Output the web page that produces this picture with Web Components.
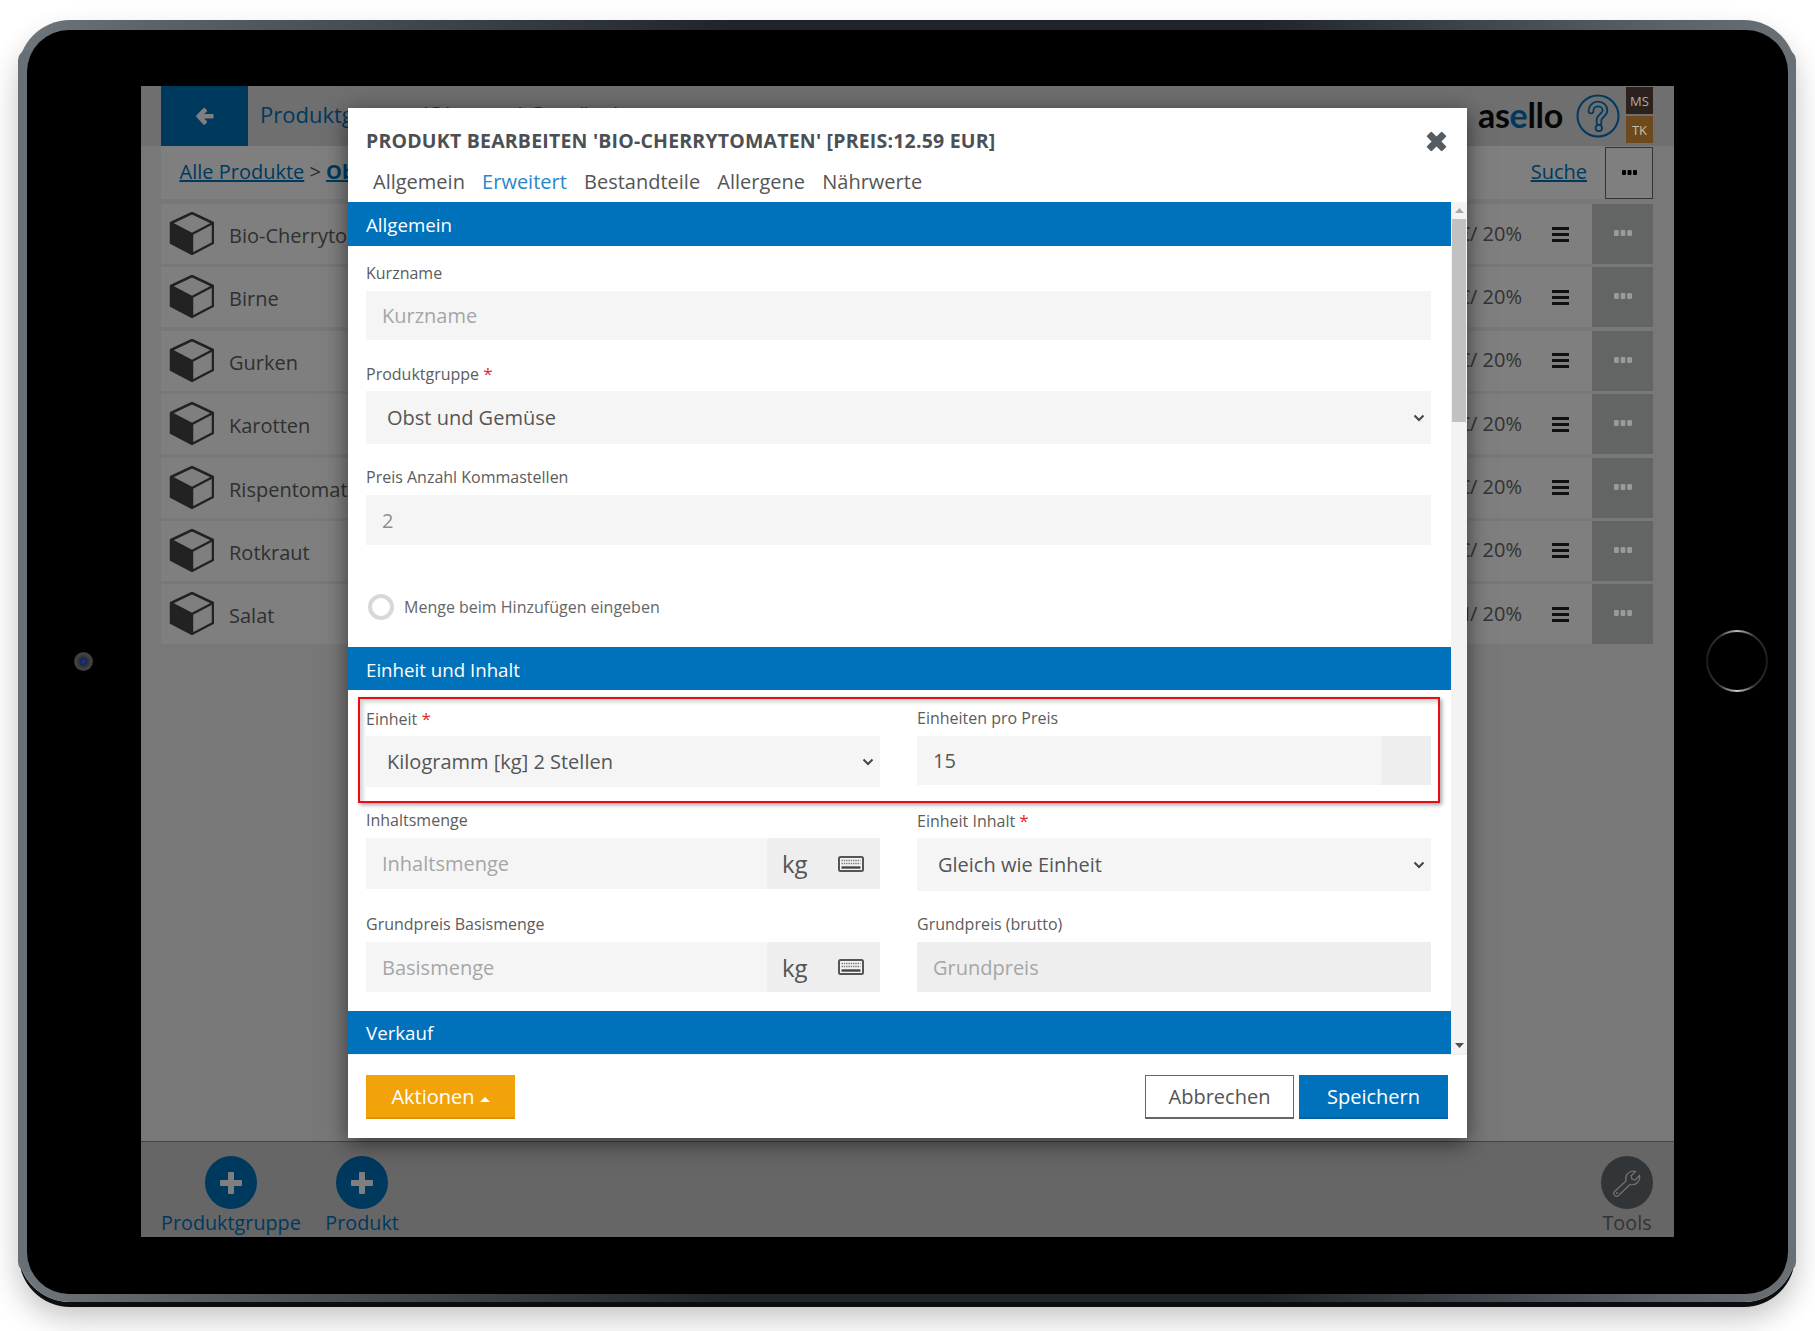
<!DOCTYPE html>
<html lang="de">
<head>
<meta charset="utf-8">
<title>Produkt bearbeiten</title>
<style>
  html, body { margin: 0; padding: 0; height: 1331px; overflow: hidden; background: #fff; font-family: "Open Sans", "Liberation Sans", sans-serif; }
</style>
</head>
<body>
<tablet-frame>
  <app-screen>
    <app-topbar slot="top" title="Produktgruppe (Obst und Gemüse)"></app-topbar>
    <crumb-bar slot="top"></crumb-bar>
    <product-row name="Bio-Cherrytomaten" tax="€/ 20%"></product-row>
    <product-row name="Birne" tax="€/ 20%"></product-row>
    <product-row name="Gurken" tax="€/ 20%"></product-row>
    <product-row name="Karotten" tax="€/ 20%"></product-row>
    <product-row name="Rispentomaten" tax="€/ 20%"></product-row>
    <product-row name="Rotkraut" tax="€/ 20%"></product-row>
    <product-row name="Salat" tax="M/ 20%"></product-row>
    <bottom-bar slot="bottom"></bottom-bar>
    <edit-modal slot="modal" heading="Produkt bearbeiten 'Bio-Cherrytomaten' [Preis:12.59 EUR]">
      <section-bar lift>Allgemein</section-bar>
      <form-section pad="17px 20px 27px 18px">
        <form-field label="Kurzname" h="49" placeholder="Kurzname"></form-field>
        <form-field label="Produktgruppe" required h="53" select value="Obst und Gemüse"></form-field>
        <form-field label="Preis Anzahl Kommastellen" h="50" muted value="2"></form-field>
        <radio-line>Menge beim Hinzufügen eingeben</radio-line>
      </form-section>
      <section-bar h="43" lift>Einheit und Inhalt</section-bar>
      <form-section grid pad="18px 19px 19px 18px">
        <form-field label="Einheit" required h="51" select value="Kilogramm [kg] 2 Stellen"></form-field>
        <form-field label="Einheiten pro Preis" h="49" value="15" addon></form-field>
        <form-field label="Inhaltsmenge" h="51" placeholder="Inhaltsmenge" unit="kg"></form-field>
        <form-field label="Einheit Inhalt" required h="53" select value="Gleich wie Einheit"></form-field>
        <form-field label="Grundpreis Basismenge" h="50" placeholder="Basismenge" unit="kg"></form-field>
        <form-field label="Grundpreis (brutto)" h="50" placeholder="Grundpreis" disabled></form-field>
        <red-mark></red-mark>
      </form-section>
      <section-bar h="43">Verkauf</section-bar>
    </edit-modal>
  </app-screen>
</tablet-frame>

<script>
const dots = '<svg width="15" height="5" viewBox="0 0 15 5"><rect width="4" height="5" rx="1"/><rect x="5.5" width="4" height="5" rx="1"/><rect x="11" width="4" height="5" rx="1"/></svg>'
const chevron = '<svg width="12" height="8" viewBox="0 0 12 8"><path d="M1.5 1.5 6 6l4.5-4.5" fill="none" stroke="#444" stroke-width="2"/></svg>'
const keyboard = `<svg width="26" height="16" viewBox="0 0 26 16">
  <rect x="1" y="1" width="24" height="14" rx="1.5" fill="#f4f4f4" stroke="#555" stroke-width="2"/>
  <path d="M3.5 4.5h19M3.5 7.5h19" stroke="#777" stroke-width="1.6" stroke-dasharray="1.4 .9"/>
  <path d="M3.5 11.5h19" stroke="#444" stroke-width="2.4"/>
</svg>`
const plus = '<svg width="24" height="24" viewBox="0 0 24 24"><path d="M9 2a1 1 0 0 1 1-1h4a1 1 0 0 1 1 1v7h7a1 1 0 0 1 1 1v4a1 1 0 0 1-1 1h-7v7a1 1 0 0 1-1 1h-4a1 1 0 0 1-1-1v-7H2a1 1 0 0 1-1-1v-4a1 1 0 0 1 1-1h7z" fill="#fff"/></svg>'

class TabletFrame extends HTMLElement {
    constructor() {
        super()
        this.attachShadow({ mode: "open" })
        this.shadowRoot.innerHTML = `
            <style>
                :host {
                    display: block; position: relative; box-sizing: border-box;
                    width: 1778px; height: 1282px; margin: 20px 0 0 18px; padding: 10px 8px 8px 9px;
                    border-radius: 52px;
                    background: linear-gradient(90deg, #6f767c 0, #5a6167 8%, #1f252b 40%, #1f252b 70%, #596067 92%, #6a7076 100%);
                    box-shadow: 0 6px 0 -1px #0b0d0f, 0 16px 30px rgba(0,0,0,.24);
                }
                #side { position: absolute; inset: 30px 0; background: #686f75; border-radius: 10px; z-index: 0; }
                #glass {
                    position: relative; z-index: 1; box-sizing: border-box; height: 100%; background: #000;
                    border-radius: 42px; padding: 56px 114px 57px 114px;
                }
                #camera {
                    position: absolute; left: 47px; top: 622px; width: 19px; height: 19px; border-radius: 50%;
                    background: radial-gradient(circle, #1c3c8e 0, #14265a 22%, #333 36%, #444 58%, #161616 100%);
                }
                #home {
                    position: absolute; right: 20px; top: 600px; width: 62px; height: 62px; border-radius: 50%;
                    box-sizing: border-box; padding: 2px;
                    background: conic-gradient(#bdbdbd 0, #333 35deg, #1a1a1a 90deg, #333 145deg, #cfcfcf 180deg, #333 215deg, #1a1a1a 270deg, #333 325deg, #bdbdbd 360deg);
                }
                #home i { display: block; width: 100%; height: 100%; border-radius: 50%; background: #000; }
            </style>
            <div id="side"></div>
            <div id="glass"><slot></slot><div id="camera"></div><div id="home"><i></i></div></div>
        `
    }
}

class AppScreen extends HTMLElement {
    constructor() {
        super()
        this.attachShadow({ mode: "open" })
        this.shadowRoot.innerHTML = `
            <style>
                :host {
                    display: flex; flex-direction: column; position: relative; overflow: hidden;
                    width: 1533px; height: 1151px; background: #f0f0f0;
                    font-family: "Open Sans", "Liberation Sans", sans-serif;
                }
                #list { flex: 1; display: flex; flex-direction: column; gap: 3.4px; padding: 5px 21px 0 20px; }
                #shade { position: absolute; inset: 0; background: rgba(0,0,0,.5); z-index: 1; }
                #modal { position: absolute; left: 207px; top: 22px; z-index: 3; }
            </style>
            <slot name="top"></slot>
            <div id="list"><slot></slot></div>
            <slot name="bottom"></slot>
            <div id="shade"></div>
            <div id="modal"><slot name="modal"></slot></div>
        `
    }
}

class AppTopbar extends HTMLElement {
    constructor() {
        super()
        this.attachShadow({ mode: "open" })
        this.shadowRoot.innerHTML = `
            <style>
                :host { display: flex; align-items: stretch; height: 60px; padding: 0 21px 0 20px; background: #dedede; }
                #back { width: 87px; background: #0072bc; display: flex; align-items: center; justify-content: center; }
                h1 { margin: 0 0 0 12px; flex: 1; font-weight: 400; font-size: 22px; line-height: 57px; color: #0072bc; white-space: nowrap; }
                #logo { font-family: "Lato", "Inter", sans-serif; font-weight: 700; font-size: 34px; line-height: 58px; letter-spacing: -.3px; color: #0c0c0c; margin-right: 13px; }
                #logo b { font-weight: inherit; color: #0072bc; }
                #help { align-self: center; margin: 0 6px 0 0; }
                #tiles { display: flex; flex-direction: column; gap: 2px; padding-top: 1px; }
                #tiles span {
                    position: relative; z-index: 2; width: 27px; height: 27px; display: flex; align-items: center; justify-content: center;
                    font-size: 13px;
                }
                #ms { background: #2c211c; color: #b3aca8; }
                #tk { background: #6c4a1d; color: #cdbba2; }
            </style>
            <div id="back">
                <svg width="20" height="20" viewBox="0 0 20 20"><path d="M10 2.2 11.8 4a1.2 1.2 0 0 1 0 1.7L9 8h8.3a1.3 1.3 0 0 1 1.3 1.3v1.9a1.3 1.3 0 0 1-1.3 1.3H9l2.8 2.4a1.2 1.2 0 0 1 0 1.7L10 18.4a1.2 1.2 0 0 1-1.7 0L1.5 11a1.2 1.2 0 0 1 0-1.7l6.8-7.1a1.2 1.2 0 0 1 1.7 0z" fill="#fff"/></svg>
            </div>
            <h1>${this.getAttribute("title")}</h1>
            <div id="logo">as<b>e</b>llo</div>
            <svg id="help" width="44" height="44" viewBox="0 0 44 44">
                <circle cx="22" cy="22" r="20.5" fill="none" stroke="#0072bc" stroke-width="2"/>
                <path d="M15 17c0-4 3-7 7-7s7 3 7 6.500c0 4-5 5-6 9v3" fill="none" stroke="#0072bc" stroke-width="6.500" stroke-linecap="round"/>
                <path d="M15 17c0-4 3-7 7-7s7 3 7 6.500c0 4-5 5-6 9v3" fill="none" stroke="#dedede" stroke-width="3" stroke-linecap="round"/>
                <circle cx="22.800" cy="34" r="3.200" fill="#dedede" stroke="#0072bc" stroke-width="1.800"/>
            </svg>
            <div id="tiles"><span id="ms">MS</span><span id="tk">TK</span></div>
        `
    }
}

class CrumbBar extends HTMLElement {
    constructor() {
        super()
        this.attachShadow({ mode: "open" })
        this.shadowRoot.innerHTML = `
            <style>
                :host { display: flex; align-items: center; height: 53px; margin: 0 21px 0 20px; padding-left: 18.5px; background: #fff; font-size: 20px; color: #555; }
                a { color: #0072bc; text-decoration: underline; }
                #path, #find { margin-top: -2px; }
                #path { flex: 1; }
                #more {
                    box-sizing: border-box; width: 48px; height: 52px; margin-left: 18px; border: 1.5px solid #666; border-top-width: 1px;
                    display: flex; align-items: center; justify-content: center; fill: #000; background: #fff;
                }
            </style>
            <div id="path"><a>Alle Produkte</a> &gt; <a><b>Obst und Gemüse</b></a></div>
            <a id="find">Suche</a>
            <div id="more">${dots}</div>
        `
    }
}

class ProductRow extends HTMLElement {
    constructor() {
        super()
        this.attachShadow({ mode: "open" })
        this.shadowRoot.innerHTML = `
            <style>
                :host { display: flex; align-items: center; height: 60px; background: #fff; color: #606060; font-size: 20px; }
                svg.cube { margin: 0 15px 0 8px; flex: none; }
                #name { flex: 1; white-space: nowrap; margin-top: 3px; margin-right: 80px; }
                #tax { font-size: 20px; color: #666; margin: -2px 30px 0 0; }
                #menu { width: 17px; height: 15px; margin-right: 23px; display: flex; flex-direction: column; justify-content: space-between; }
                #menu i { display: block; height: 3px; background: #222; }
                #act { align-self: stretch; width: 61px; background: #c7c8c9; display: flex; align-items: center; justify-content: center; }
                #act span { position: relative; z-index: 2; display: flex; fill: #9a9a9a; margin-top: -2px; }
                #act svg { width: 20px; height: 6px; }
            </style>
            <svg class="cube" width="45" height="44" viewBox="0 0 45 44">
                <path d="M23 34V22L2 11v20l21 11z" fill="#444"/>
                <path d="M23 1 44 11v20L23 42 2 31V11zM2 11l21 11 21-11M23 22v20" fill="none" stroke="#444" stroke-width="2.500" stroke-linejoin="round"/>
            </svg>
            <div id="name">${this.getAttribute("name")}</div>
            <div id="tax">${this.getAttribute("tax")}</div>
            <div id="menu"><i></i><i></i><i></i></div>
            <div id="act"><span>${dots}</span></div>
        `
    }
}

class BottomBar extends HTMLElement {
    constructor() {
        super()
        this.attachShadow({ mode: "open" })
        this.shadowRoot.innerHTML = `
            <style>
                :host { display: flex; gap: 24.5px; box-sizing: border-box; height: 96px; padding: 14px 21px 0 20px; background: #cdcdcd; border-top: 1px solid #888; }
                .item { display: flex; flex-direction: column; align-items: center; font-size: 19.8px; line-height: 28px; color: #0072bc; }
                .dot { width: 52px; height: 53px; border-radius: 50%; background: #0072bc; display: flex; align-items: center; justify-content: center; }
                #tools { margin-left: auto; color: #666; }
                #tools .dot { background: #656a70; }
            </style>
            <div class="item"><div class="dot">${plus}</div>Produktgruppe</div>
            <div class="item"><div class="dot">${plus}</div>Produkt</div>
            <div class="item" id="tools">
                <div class="dot">
                    <svg width="32" height="32" viewBox="0 0 32 32"><path d="M3 25 15 14C13.500 9 17 4 23 4l1.500.5L20 9l1 3 3 1 4.500-4.500C29.500 13 26 19 19 17.500L7 29C5 30.500 1.500 27 3 25z" fill="none" stroke="#e4e4e4" stroke-width="1.200"/><circle cx="6" cy="26" r="1" fill="#e4e4e4"/></svg>
                </div>
                Tools
            </div>
        `
    }
}

class EditModal extends HTMLElement {
    constructor() {
        super()
        this.attachShadow({ mode: "open" })
        const tabs = ["Allgemein", "Erweitert", "Bestandteile", "Allergene", "Nährwerte"]
        this.shadowRoot.innerHTML = `
            <style>
                :host {
                    display: flex; flex-direction: column; box-sizing: border-box; width: 1119px; height: 1030px;
                    background: #fff; color: #555; box-shadow: 0 5px 22px rgba(0,0,0,.55);
                }
                header { height: 94px; flex: none; position: relative; padding: 20px 0 0 18px; box-sizing: border-box; }
                h2 { margin: 0; font-size: 19.5px; line-height: 26px; font-weight: 700; color: #4b5055; text-transform: uppercase; letter-spacing: .2px; white-space: nowrap; }
                #close { position: absolute; right: 19px; top: 22px; }
                nav { display: flex; gap: 17.2px; margin: 13px 0 0 7px; font-size: 20px; line-height: 30px; color: #555; }
                nav .on { color: #2a87c8; }
                #body { height: 852px; display: flex; flex: none; overflow: hidden; }
                #content { width: 1103px; flex: none; overflow: hidden; }
                #bar { flex: 1; display: flex; flex-direction: column; align-items: center; background: #f3f3f3; padding: 0 1px; }
                #bar .arrow { height: 17px; display: flex; align-items: center; flex: none; }
                #bar .thumb { align-self: stretch; height: 203px; background: #c1c1c1; flex: none; }
                #bar .rest { flex: 1; }
                footer { flex: 1; display: flex; justify-content: space-between; padding: 20px 19px 0 18px; border-top: 1px solid #eee; }
                #right { display: flex; gap: 5px; }
                button {
                    box-sizing: border-box; height: 44px; width: 149px; font: 400 20px "Open Sans", "Liberation Sans", sans-serif;
                    padding: 0; border: 1px solid #0072bc; background: #0072bc; color: #fff;
                }
                #actions { background: #f2a30a; border-color: #f2a30a; border-bottom: 2px solid #dc9209; }
                #actions i { display: inline-block; width: 0; height: 0; border: 5px solid transparent; border-top: 0; border-bottom-color: #fff; margin-left: 5px; vertical-align: 2px; }
                #cancel { background: #fff; color: #555; border-color: #666; border-bottom-width: 2px; }
                #save { border-bottom: 2px solid #005f9e; }
            </style>
            <header>
                <h2>${this.getAttribute("heading")}</h2>
                <svg id="close" width="23" height="23" viewBox="0 0 21 21"><path d="M2 6.500a1 1 0 0 1 0-1.500L5 2a1 1 0 0 1 1.500 0l4 4 4-4A1 1 0 0 1 16 2l3 3a1 1 0 0 1 0 1.500l-4 4 4 4a1 1 0 0 1 0 1.500l-3 3a1 1 0 0 1-1.500 0l-4-4-4 4A1 1 0 0 1 5 19l-3-3a1 1 0 0 1 0-1.500l4-4z" fill="#555c62"/></svg>
                <nav>${tabs.map((t, i) => `<span class="${i === 1 ? "on" : ""}">${t}</span>`).join("")}</nav>
            </header>
            <div id="body">
                <div id="content"><slot></slot></div>
                <div id="bar">
                    <div class="arrow"><svg width="9" height="5"><path d="M0 5 4.500 0 9 5z" fill="#a8a8a8"/></svg></div>
                    <div class="thumb"></div>
                    <div class="rest"></div>
                    <div class="arrow"><svg width="9" height="5"><path d="M0 0h9L4.500 5z" fill="#505050"/></svg></div>
                </div>
            </div>
            <footer>
                <button id="actions">Aktionen<i></i></button>
                <div id="right"><button id="cancel">Abbrechen</button><button id="save">Speichern</button></div>
            </footer>
        `
    }
}

class SectionBar extends HTMLElement {
    constructor() {
        super()
        this.attachShadow({ mode: "open" })
        const h = this.getAttribute("h") || 44
        const top = this.hasAttribute("lift") ? 1 : 0
        this.shadowRoot.innerHTML = `
            <style>
                :host { display: flex; align-items: center; box-sizing: border-box; height: ${h}px; padding: ${top}px 0 0 18px; background: #0072bc; color: #fff; font-size: 18.7px; font-weight: 500; }
            </style>
            <slot></slot>
        `
    }
}

class FormSection extends HTMLElement {
    constructor() {
        super()
        this.attachShadow({ mode: "open" })
        const layout = this.hasAttribute("grid")
            ? "display: grid; grid-template-columns: 514px 514px; column-gap: 37px; row-gap: 23px; align-items: start;"
            : "display: flex; flex-direction: column; gap: 23px;"
        this.shadowRoot.innerHTML = `
            <style>
                :host { ${layout} position: relative; padding: ${this.getAttribute("pad")}; }
            </style>
            <slot></slot>
        `
    }
}

class FormField extends HTMLElement {
    constructor() {
        super()
        this.attachShadow({ mode: "open" })
        const value = this.getAttribute("value")
        const placeholder = this.getAttribute("placeholder")
        const unit = this.getAttribute("unit")
        const isSelect = this.hasAttribute("select")
        const disabled = this.hasAttribute("disabled")
        let addon = ""
        if (unit) addon = `<div class="addon unit"><span>${unit}</span>${keyboard}</div>`
        else if (this.hasAttribute("addon")) addon = '<div class="addon"></div>'
        let tone = "#555"
        if (placeholder) tone = "#a6a6a6"
        if (this.hasAttribute("muted")) tone = "#8e8e8e"
        this.shadowRoot.innerHTML = `
            <style>
                :host { display: block; }
                label { display: block; height: 22px; margin-bottom: 6px; font-size: 16px; line-height: 21px; color: #5c5c5c; }
                label i { color: #e5262b; font-style: normal; font-size: 17px; }
                #box { display: flex; align-items: stretch; height: ${this.getAttribute("h")}px; background: ${disabled ? "#eee" : "#f5f5f5"}; font-size: 20px; color: ${tone}; }
                #text { flex: 1; display: flex; align-items: center; padding-left: ${isSelect ? 21 : 16}px; }
                #chev { display: flex; align-items: center; padding-right: 6px; }
                .addon { width: 50px; background: #eee; }
                .unit { width: 113px; box-sizing: border-box; display: flex; align-items: center; justify-content: space-between; padding: 0 16px 0 15px; font-size: 24px; color: #555; }
            </style>
            <label>${this.getAttribute("label")}${this.hasAttribute("required") ? " <i>*</i>" : ""}</label>
            <div id="box">
                <div id="text">${value || placeholder}</div>
                ${isSelect ? `<div id="chev">${chevron}</div>` : ""}
                ${addon}
            </div>
        `
    }
}

class RadioLine extends HTMLElement {
    constructor() {
        super()
        this.attachShadow({ mode: "open" })
        this.shadowRoot.innerHTML = `
            <style>
                :host { display: flex; align-items: center; gap: 10px; margin: 26px 0 0 2px; height: 26px; font-size: 16px; color: #666; }
                i { box-sizing: border-box; width: 26px; height: 26px; border-radius: 50%; border: 4px solid #d8d8d8; }
            </style>
            <i></i><slot></slot>
        `
    }
}

class RedMark extends HTMLElement {
    constructor() {
        super()
        this.attachShadow({ mode: "open" })
        this.shadowRoot.innerHTML = `
            <style>
                :host {
                    position: absolute; left: 10px; top: 7px; box-sizing: border-box; width: 1082px; height: 106px;
                    border: 2px solid #ea0c14; box-shadow: 2px 2px 4px rgba(0,0,0,.35), inset 3px 3px 4px rgba(0,0,0,.18);
                    pointer-events: none;
                }
            </style>
        `
    }
}

customElements.define("tablet-frame", TabletFrame)
customElements.define("app-screen", AppScreen)
customElements.define("app-topbar", AppTopbar)
customElements.define("crumb-bar", CrumbBar)
customElements.define("product-row", ProductRow)
customElements.define("bottom-bar", BottomBar)
customElements.define("edit-modal", EditModal)
customElements.define("section-bar", SectionBar)
customElements.define("form-section", FormSection)
customElements.define("form-field", FormField)
customElements.define("radio-line", RadioLine)
customElements.define("red-mark", RedMark)
</script>
</body>
</html>
